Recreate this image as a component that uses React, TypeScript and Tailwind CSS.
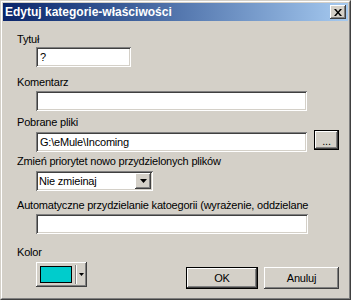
import React from "react";

const raised =
  "shadow-[inset_-1px_-1px_#404040,inset_1px_1px_#ffffff,inset_-2px_-2px_#808080,inset_2px_2px_#d4d0c8]";
const sunken =
  "shadow-[inset_1px_1px_#808080,inset_-1px_-1px_#ffffff,inset_2px_2px_#404040,inset_-2px_-2px_#d4d0c8]";

const Label: React.FC<{ text: string; className?: string }> = ({ text, className = "" }) => (
  <div className={`ml-[14px] h-[13px] leading-[13px] whitespace-nowrap ${className}`}>{text}</div>
);

const TextBox: React.FC<{ value?: string; width: string; className?: string }> = ({
  value = "",
  width,
  className = "",
}) => (
  <div className={`h-[20px] ${width} bg-white ${sunken} px-[4px] leading-[20px] whitespace-nowrap ${className}`}>
    {value}
  </div>
);

const Button: React.FC<{ label: string; isDefault?: boolean; className?: string; innerClass?: string }> = ({
  label,
  isDefault,
  className = "",
  innerClass = "items-center",
}) => (
  <div className={`${isDefault ? "border border-black" : ""} ${className}`}>
    <div className={`h-full w-full flex justify-center ${innerClass} ${raised}`}>{label}</div>
  </div>
);

export default function App() {
  return (
    <div
      className="w-[351px] h-[300px] bg-[#d4d0c8] text-[11px] tracking-[-0.2px] text-black border-t border-l border-t-[#d4d0c8] border-l-[#d4d0c8] border-r border-b border-r-[#404040] border-b-[#404040] overflow-hidden"
      style={{ fontFamily: '"Liberation Sans", Arial, sans-serif' }}
    >
      <div className="h-full w-full border-t border-l border-t-white border-l-white border-r border-b border-r-[#808080] border-b-[#808080] px-[1px] pt-[1px]">
        {/* Title bar */}
        <div className="h-[18px] flex items-center justify-between bg-gradient-to-r from-[#0a246a] to-[#a6caf0] pl-[2px] pr-[2px]">
          <span className="text-white font-bold text-[12px] tracking-normal leading-[18px]">
            Edytuj kategorie-właściwości
          </span>
          <div className={`w-[16px] h-[14px] bg-[#d4d0c8] ${raised} flex items-center justify-center`}>
            <svg width="8" height="7" viewBox="0 0 8 7">
              <path d="M0 0h2l2 2.5L6 0h2L5 3.5 8 7H6L4 4.5 2 7H0l3-3.5z" fill="#000" />
            </svg>
          </div>
        </div>

        {/* Body */}
        <div className="flex flex-col">
          <Label text="Tytuł" className="mt-[12px]" />
          <TextBox value="?" width="w-[95px]" className="ml-[33px] mt-[1px]" />

          <Label text="Komentarz" className="mt-[9px]" />
          <TextBox width="w-[271px]" className="ml-[33px] mt-[2px]" />

          <Label text="Pobrane pliki" className="mt-[5px]" />
          <div className="flex items-start mt-[1px]">
            <TextBox value="G:\eMule\Incoming" width="w-[271px]" className="ml-[33px] mt-[2px]" />
            <Button
              label="..."
              isDefault
              className="ml-[7px] w-[25px] h-[20px]"
              innerClass="items-end pb-[2px] leading-[12px]"
            />
          </div>

          <Label text="Zmień priorytet nowo przydzielonych plików" className="mt-[3px]" />
          <div className={`ml-[33px] mt-[3px] w-[117px] h-[20px] bg-white ${sunken} flex items-stretch p-[2px]`}>
            <span className="flex-1 leading-[16px] pl-[1px]">Nie zmieinaj</span>
            <div className={`w-[16px] bg-[#d4d0c8] ${raised} flex items-center justify-center`}>
              <svg width="7" height="4" viewBox="0 0 7 4">
                <path d="M0 0h7L3.5 4z" fill="#000" />
              </svg>
            </div>
          </div>

          <Label text="Automatyczne przydzielanie katoegorii (wyrażenie, oddzielane" className="mt-[8px]" />
          <TextBox width="w-[272px]" className="ml-[33px] mt-[2px]" />

          <Label text="Kolor" className="mt-[12px]" />
          <div className="flex items-start mt-[3px]">
            <div className={`ml-[33px] w-[51px] h-[25px] ${raised} flex items-center pl-[4px]`}>
              <div className="w-[32px] h-[17px] border border-black bg-[#00cccc]" />
              <div className="ml-[3px] w-[2px] h-[19px] border-l border-l-[#808080] border-r border-r-white" />
              <svg className="ml-[2px]" width="5" height="3" viewBox="0 0 5 3">
                <path d="M0 0h5L2.5 3z" fill="#000" />
              </svg>
            </div>
            <Button label="OK" isDefault className="ml-[99px] mt-[5px] w-[72px] h-[22px]" />
            <Button label="Anuluj" className="ml-[6px] mt-[5px] w-[75px] h-[22px]" />
          </div>
        </div>
      </div>
    </div>
  );
}
